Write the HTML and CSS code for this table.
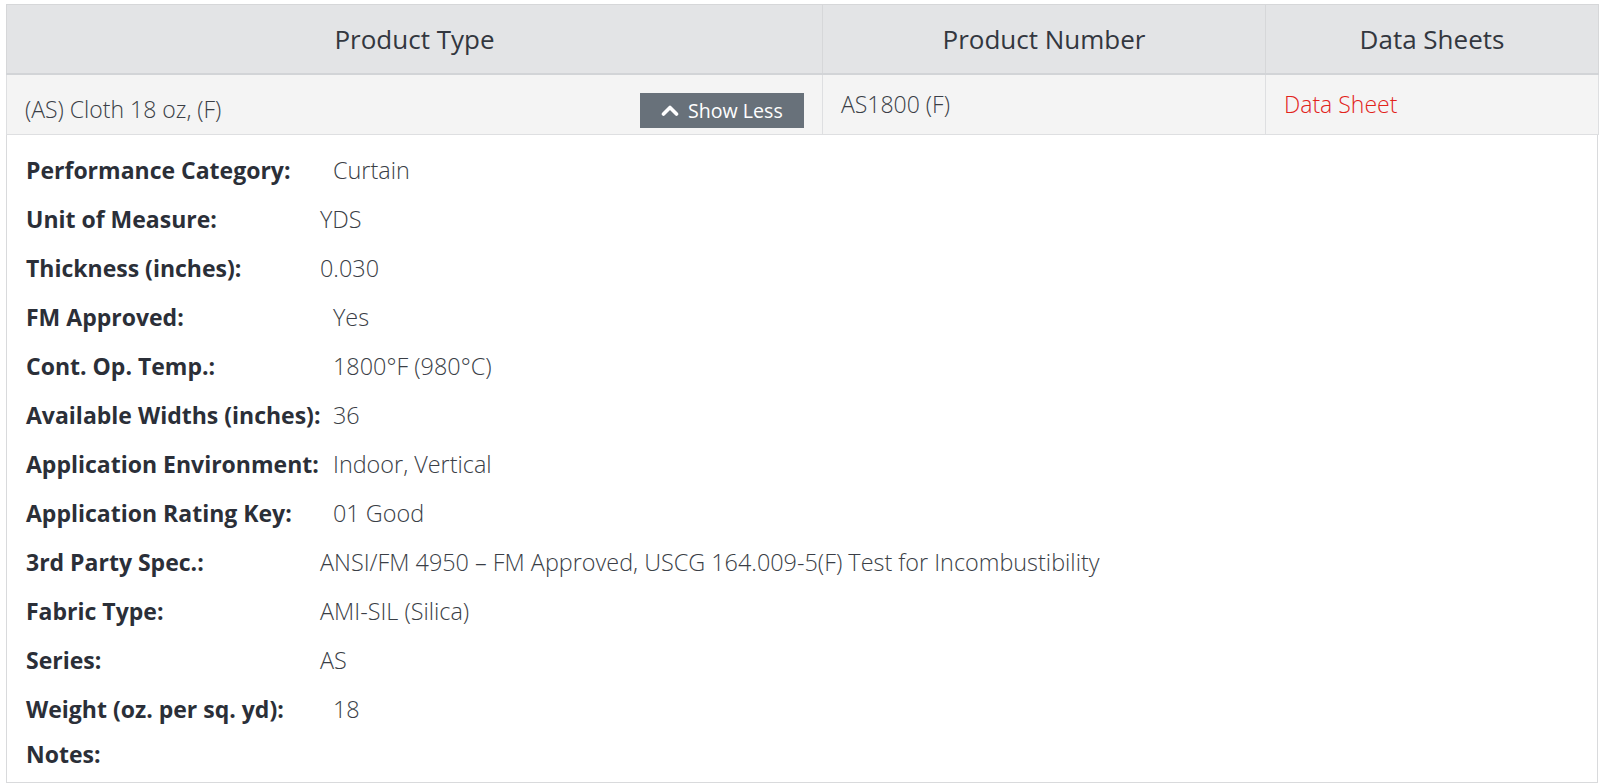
FILE: index.html
```html
<!DOCTYPE html>
<html>
<head>
<meta charset="utf-8">
<link rel="stylesheet" href="styles.css">
</head>
<body>
<div class="wrap">
  <table class="products">
    <colgroup>
      <col class="c1">
      <col class="c2">
      <col class="c3">
    </colgroup>
    <thead>
      <tr>
        <th>Product Type</th>
        <th>Product Number</th>
        <th>Data Sheets</th>
      </tr>
    </thead>
    <tbody>
      <tr class="item">
        <td>
          <div class="type-cell">
            <span class="type-name">(AS) Cloth 18 oz, (F)</span>
            <button class="toggle" type="button">
              <svg class="chev" width="18" height="12" viewBox="0 0 18 12"><polyline points="2.5,10 9,3.5 15.5,10" fill="none" stroke="#fff" stroke-width="3.6" stroke-linecap="round" stroke-linejoin="round"/></svg>
              <span>Show Less</span>
            </button>
          </div>
        </td>
        <td>AS1800 (F)</td>
        <td><a class="sheet" href="#">Data Sheet</a></td>
      </tr>
    </tbody>
  </table>
  <div class="details">
    <div class="row far"><span class="label">Performance Category:</span><span class="value">Curtain</span></div>
    <div class="row"><span class="label">Unit of Measure:</span><span class="value">YDS</span></div>
    <div class="row"><span class="label">Thickness (inches):</span><span class="value">0.030</span></div>
    <div class="row far"><span class="label">FM Approved:</span><span class="value">Yes</span></div>
    <div class="row far"><span class="label">Cont. Op. Temp.:</span><span class="value">1800°F (980°C)</span></div>
    <div class="row far"><span class="label">Available Widths (inches):</span><span class="value">36</span></div>
    <div class="row far"><span class="label">Application Environment:</span><span class="value">Indoor, Vertical</span></div>
    <div class="row far"><span class="label">Application Rating Key:</span><span class="value">01 Good</span></div>
    <div class="row"><span class="label">3rd Party Spec.:</span><span class="value">ANSI/FM 4950 – FM Approved, USCG 164.009-5(F) Test for Incombustibility</span></div>
    <div class="row"><span class="label">Fabric Type:</span><span class="value">AMI-SIL (Silica)</span></div>
    <div class="row"><span class="label">Series:</span><span class="value">AS</span></div>
    <div class="row far"><span class="label">Weight (oz. per sq. yd):</span><span class="value">18</span></div>
    <div class="row last"><span class="label">Notes:</span><span class="value"></span></div>
  </div>
</div>
</body>
</html>
```
FILE: styles.css
```css
* { box-sizing: border-box; }
html, body {
  margin: 0;
  padding: 0;
  background: #fff;
}
body {
  font-family: "Open Sans", "Liberation Sans", sans-serif;
  color: #2f333b;
}
.wrap {
  padding: 4px 2px 0 6px;
}
.products {
  width: 1592px;
  border-collapse: collapse;
  table-layout: fixed;
}
.c1 { width: 816px; }
.c2 { width: 443px; }
.c3 { width: 333px; }
.products th {
  background: #e3e4e6;
  border: 1px solid #d6d7d9;
  border-bottom: 2px solid #d2d4d7;
  height: 69px;
  font-size: 26px;
  font-weight: 400;
  color: #33373f;
  text-align: center;
  vertical-align: middle;
  padding: 0 18px;
}
.products td {
  background: #f4f4f4;
  border: 1px solid #dedfe1;
  border-top: none;
  padding: 14px 18px 6px;
  vertical-align: top;
  font-size: 23px;
  font-weight: 300;
  line-height: 30px;
  color: #3a3e46;
  height: 61px;
}
.type-cell {
  display: flex;
  align-items: center;
  justify-content: space-between;
  margin-top: 4px;
}
.type-name {
  line-height: 30px;
  margin-top: -2px;
}
.toggle {
  display: flex;
  align-items: center;
  gap: 9px;
  height: 35px;
  width: 164px;
  padding: 0 0 0 21px;
  border: none;
  border-radius: 0;
  background: #68717a;
  color: #fff;
  font-family: "Open Sans", "Liberation Sans", sans-serif;
  font-size: 19.6px;
  font-weight: 400;
  cursor: pointer;
}
.chev { display: block; }
.sheet {
  color: #e2231a;
  text-decoration: none;
}
.details {
  width: 1592px;
  border: 1px solid #d9dadc;
  border-top: none;
  padding: 10px 18px 8px 19px;
  background: #fff;
}
.row {
  display: grid;
  grid-template-columns: 294px 1fr;
  height: 49px;
  align-items: center;
  font-size: 23px;
  white-space: nowrap;
}
.row.far {
  grid-template-columns: 307px 1fr;
}
.row.last {
  height: 41px;
}
.label {
  font-weight: 700;
  color: #2b2f38;
}
.value {
  font-weight: 300;
  font-size: 23.4px;
  color: #3a3e46;
}
```
